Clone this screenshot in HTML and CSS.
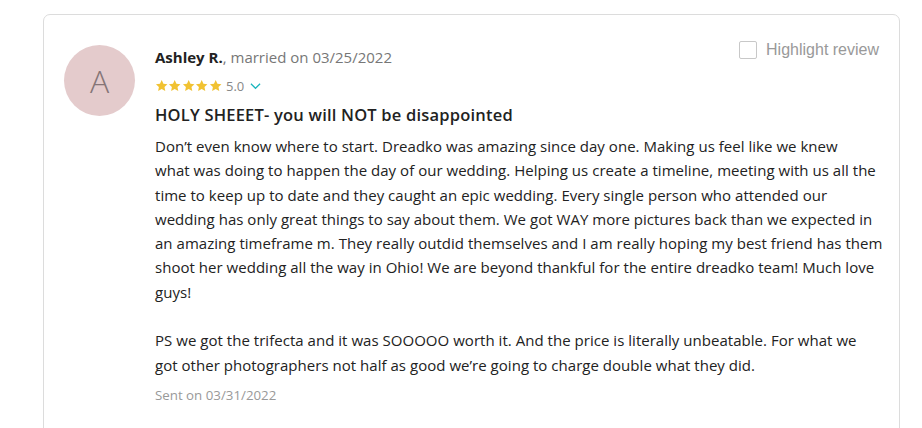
FILE: index.html
```html
<!DOCTYPE html>
<html>
<head>
<meta charset="utf-8">
<link rel="stylesheet" href="styles.css">
</head>
<body>
<div class="page">
  <article class="review">
    <div class="avatar">A</div>
    <div class="main">
      <div class="head">
        <div class="meta">
          <div class="author"><b>Ashley R.</b>, married on 03/25/2022</div>
          <div class="rating">
            <span class="stars">
              <svg viewBox="0 0 24 24"><path d="M12 1.8l3.1 6.6 7.2.9-5.3 5 1.4 7.1L12 17.9l-6.4 3.5 1.4-7.1-5.3-5 7.2-.9z"/></svg>
              <svg viewBox="0 0 24 24"><path d="M12 1.8l3.1 6.6 7.2.9-5.3 5 1.4 7.1L12 17.9l-6.4 3.5 1.4-7.1-5.3-5 7.2-.9z"/></svg>
              <svg viewBox="0 0 24 24"><path d="M12 1.8l3.1 6.6 7.2.9-5.3 5 1.4 7.1L12 17.9l-6.4 3.5 1.4-7.1-5.3-5 7.2-.9z"/></svg>
              <svg viewBox="0 0 24 24"><path d="M12 1.8l3.1 6.6 7.2.9-5.3 5 1.4 7.1L12 17.9l-6.4 3.5 1.4-7.1-5.3-5 7.2-.9z"/></svg>
              <svg viewBox="0 0 24 24"><path d="M12 1.8l3.1 6.6 7.2.9-5.3 5 1.4 7.1L12 17.9l-6.4 3.5 1.4-7.1-5.3-5 7.2-.9z"/></svg>
            </span>
            <span class="score">5.0</span>
            <svg class="chev" viewBox="0 0 12 8"><path d="M1 1.5l5 5 5-5"/></svg>
          </div>
        </div>
        <label class="highlight"><span class="box"></span>Highlight review</label>
      </div>
      <h3 class="title">HOLY SHEEET- you will NOT be disappointed</h3>
      <div class="body">
        <p>Don’t even know where to start. Dreadko was amazing since day one. Making us feel like we knew<br>what was doing to happen the day of our wedding. Helping us create a timeline, meeting with us all the<br>time to keep up to date and they caught an epic wedding. Every single person who attended our<br>wedding has only great things to say about them. We got WAY more pictures back than we expected in<br>an amazing timeframe m. They really outdid themselves and I am really hoping my best friend has them<br>shoot her wedding all the way in Ohio! We are beyond thankful for the entire dreadko team! Much love<br>guys!</p>
        <p>PS we got the trifecta and it was SOOOOO worth it. And the price is literally unbeatable. For what we<br>got other photographers not half as good we’re going to charge double what they did.</p>
      </div>
      <div class="sent">Sent on 03/31/2022</div>
    </div>
  </article>
</div>
</body>
</html>
```

FILE: styles.css
```css
html, body {
  margin: 0;
  padding: 0;
  background: #fff;
}
.page {
  padding: 14px 22px 0 43px;
  height: 428px;
  box-sizing: border-box;
  overflow: hidden;
}
.review {
  display: flex;
  gap: 20px;
  border: 1px solid #dcdcdc;
  border-radius: 7px;
  padding: 30px 20px 60px 20px;
  font-family: "Open Sans", "Liberation Sans", sans-serif;
  color: #222;
}
.avatar {
  flex: none;
  width: 71px;
  height: 71px;
  border-radius: 50%;
  background: #e4cbcc;
  color: #857577;
  display: flex;
  align-items: center;
  justify-content: center;
  font-family: "Open Sans", sans-serif;
  font-size: 32px;
  font-weight: 300;
}
.main {
  flex: 1;
  min-width: 0;
}
.head {
  display: flex;
  justify-content: space-between;
  align-items: flex-start;
}
.author {
  font-size: 15px;
  color: #777;
  margin-top: 2px;
  line-height: 20px;
}
.author b {
  color: #222;
  font-weight: 700;
}
.rating {
  display: flex;
  align-items: center;
  margin-top: 11px;
  height: 16px;
}
.stars {
  display: flex;
}
.stars svg {
  width: 13.4px;
  height: 13.4px;
  fill: #f1c232;
}
.score {
  font-size: 13px;
  color: #888;
  margin-left: 4px;
}
.chev {
  width: 11px;
  height: 8px;
  margin-left: 6px;
  fill: none;
  stroke: #19b5bd;
  stroke-width: 1.3;
}
.highlight {
  display: flex;
  align-items: center;
  font-family: "Liberation Sans", sans-serif;
  font-size: 16px;
  color: #999;
  gap: 9px;
  margin-top: -4px;
}
.box {
  width: 18px;
  height: 18px;
  box-sizing: border-box;
  border: 1px solid #c8c8c8;
  border-radius: 2px;
}
.title {
  margin: 10px 0 0;
  font-size: 16.5px;
  font-weight: 600;
  letter-spacing: 0.2px;
  line-height: 22px;
  color: #222;
}
.body {
  margin-top: 8px;
  font-size: 15px;
  letter-spacing: 0.03px;
  line-height: 24.3px;
}
.body p {
  margin: 0 0 24.3px;
  white-space: nowrap;
}
.body p:last-child {
  margin-bottom: 0;
}
.sent {
  margin-top: 9px;
  font-size: 13.3px;
  color: #999;
}
```
